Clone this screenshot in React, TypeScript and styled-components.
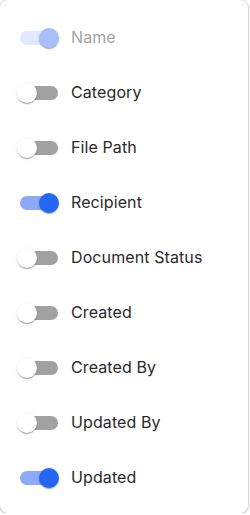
import React, { useState } from 'react';
import styled, { createGlobalStyle } from 'styled-components';

interface ColumnType {
  label: string;
  visible: boolean;
  locked?: boolean;
}

const initialColumns: ColumnType[] = [
  { label: 'Name', visible: true, locked: true },
  { label: 'Category', visible: false },
  { label: 'File Path', visible: false },
  { label: 'Recipient', visible: true },
  { label: 'Document Status', visible: false },
  { label: 'Created', visible: false },
  { label: 'Created By', visible: false },
  { label: 'Updated By', visible: false },
  { label: 'Updated', visible: true },
];

const App: React.FC = () => {
  const [columns, setColumns] = useState<ColumnType[]>(initialColumns);

  const toggle = (index: number): void => {
    setColumns(
      columns.map((col, i) =>
        i === index && !col.locked ? { ...col, visible: !col.visible } : col
      )
    );
  };

  return (
    <>
      <GlobalStyle />
      <Menu>
        {columns.map((col, i) => (
          <Row key={col.label} onClick={(): void => toggle(i)}>
            <Switch>
              <Track checked={col.visible} disabled={col.locked} />
              <Thumb checked={col.visible} disabled={col.locked} />
            </Switch>
            <Label disabled={col.locked}>{col.label}</Label>
          </Row>
        ))}
      </Menu>
    </>
  );
};

const GlobalStyle = createGlobalStyle`
  body {
    margin: 0;
    background: #ffffff;
    font-family: Inter, "Noto Sans", sans-serif;
  }
`;

const Menu = styled.div`
  box-sizing: border-box;
  width: 248px;
  height: 513px;
  padding: 10px 0 9px;
  background-color: #ffffff;
  border-radius: 8px;
  box-shadow: 0 0 0 1px rgba(0, 0, 0, 0.1), 0 1px 3px rgba(0, 0, 0, 0.18);
`;

const Row = styled.div`
  display: flex;
  align-items: center;
  height: 55px;
  padding-left: 17px;
  cursor: pointer;
`;

const Switch = styled.div`
  position: relative;
  flex-shrink: 0;
  width: 42px;
  height: 20px;
  margin-right: 12px;
`;

const Track = styled.div<{ checked: boolean; disabled?: boolean }>`
  position: absolute;
  left: 3px;
  top: 3px;
  width: 38px;
  height: 14px;
  border-radius: 7px;
  background-color: ${(props) =>
    props.disabled ? '#e2e9fd' : props.checked ? '#8caaf9' : '#a1a1a1'};
`;

const Thumb = styled.div<{ checked: boolean; disabled?: boolean }>`
  position: absolute;
  top: 0;
  left: ${(props) => (props.checked ? '22px' : '0')};
  width: 20px;
  height: 20px;
  border-radius: 50%;
  background-color: ${(props) =>
    props.disabled ? '#a7bffb' : props.checked ? '#2467f5' : '#ffffff'};
  box-shadow: 0 2px 1px -1px rgba(0, 0, 0, 0.2), 0 1px 1px rgba(0, 0, 0, 0.14),
    0 1px 3px rgba(0, 0, 0, 0.12);
`;

const Label = styled.span<{ disabled?: boolean }>`
  margin-bottom: 2px;
  font-size: 16px;
  letter-spacing: 0.1px;
  color: ${(props) => (props.disabled ? '#a3a3a3' : '#2a2a2a')};
`;

export default App;
